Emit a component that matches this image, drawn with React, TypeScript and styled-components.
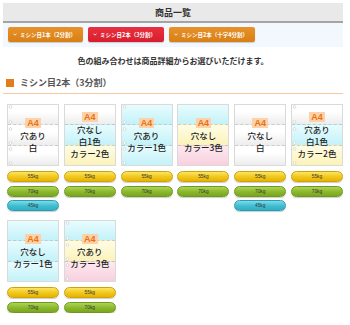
import React from "react";
import styled, { createGlobalStyle } from "styled-components";

const Global = createGlobalStyle`
  html, body { margin: 0; padding: 0; background: #fff; }
  body { font-family: "Noto Sans CJK JP", "Noto Sans", sans-serif; color: #333; }
`;

const Page = styled.div`
  width: 340px;
  margin-left: 3px;
  padding-top: 3px;
`;

const TitleBar = styled.div`
  height: 18px;
  background: #e9e9e9;
  border-bottom: 2px solid #a4a4a4;
  display: flex;
  align-items: center;
  justify-content: center;
  font-size: 9px;
  font-weight: 700;
  color: #333;
`;

const TabBar = styled.div`
  background: #f2f8fe;
  display: flex;
  gap: 5px;
  padding: 4px 5px 5px;
`;

const Tab = styled.div<{ $active?: boolean; $w: number }>`
  width: ${(p) => p.$w}px;
  height: 15px;
  box-sizing: border-box;
  border-radius: 2px;
  background: ${(p) =>
    p.$active
      ? "linear-gradient(#e8303f, #d81e2e)"
      : "linear-gradient(#e6922a, #d97f14)"};
  box-shadow: 0 1px 1px rgba(0, 0, 0, 0.18);
  color: #fff;
  font-size: 5.5px;
  font-weight: 700;
  display: flex;
  align-items: center;
  gap: 3px;
  padding-left: 5px;
  white-space: nowrap;
`;

const Notice = styled.div`
  padding: 9px 0 11px;
  line-height: 10px;
  text-align: center;
  font-size: 8px;
  font-weight: 700;
  color: #333;
`;

const Heading = styled.div`
  display: flex;
  align-items: center;
  gap: 6px;
  padding: 0 0 4px 3px;
  border-bottom: 1px solid #f6c9a2;
  font-size: 9px;
  line-height: 12px;
  font-weight: 700;
  color: #555;
`;

const HeadMark = styled.span`
  width: 8px;
  height: 8px;
  background: #e27c1c;
`;

const Grid = styled.div`
  display: grid;
  grid-template-columns: repeat(6, 52px);
  column-gap: 4.8px;
  row-gap: 9px;
  padding: 10px 0 0 4px;
  align-items: start;
`;

const Item = styled.div`
  display: flex;
  flex-direction: column;
`;

const Card = styled.div`
  height: 62px;
  box-sizing: border-box;
  border: 1px solid #dadada;
  display: grid;
  overflow: hidden;
  & > * {
    grid-area: 1 / 1;
  }
`;

const Bands = styled.div`
  display: flex;
  flex-direction: column;
`;

type Tone = "white" | "cyan" | "yellow" | "pink";

const toneBg: Record<Tone, string> = {
  white: "linear-gradient(#ffffff 35%, #ededed)",
  cyan: "linear-gradient(#e8fcfe, #c3f2f8)",
  yellow: "linear-gradient(#fffce6, #fbf3b9)",
  pink: "linear-gradient(#fde9f0, #f8d0dd)",
};

const Band = styled.div<{ $tone: Tone }>`
  flex: 1;
  background: ${(p) => toneBg[p.$tone]};
  & + & {
    border-top: 1px dashed rgba(170, 170, 170, 0.5);
  }
`;

const Holes = styled.svg`
  width: 6px;
  height: 60px;
  justify-self: start;
  align-self: start;
`;

const Content = styled.div`
  display: flex;
  flex-direction: column;
  align-items: center;
  justify-content: center;
`;

const Size = styled.span`
  background: #fdd1a9;
  color: #e57512;
  font-size: 9px;
  font-weight: 700;
  line-height: 10px;
  padding: 0 2px;
  margin-bottom: 1px;
  font-family: "Liberation Sans", sans-serif;
`;

const Line = styled.span`
  font-size: 8.5px;
  line-height: 12px;
  font-weight: 500;
  color: #222;
  white-space: nowrap;
`;

const Pills = styled.div`
  display: flex;
  flex-direction: column;
  gap: 3.5px;
  margin-top: 5px;
`;

type PillKind = "yellow" | "green" | "blue";

const pillStyle: Record<PillKind, { bg: string; border: string }> = {
  yellow: { bg: "linear-gradient(#fbe660, #f1c61c 55%, #e6b402)", border: "#cfa208" },
  green: { bg: "linear-gradient(#afd455, #8ab72c 55%, #7aa61f)", border: "#6e9820" },
  blue: { bg: "linear-gradient(#7fdbe8, #3fbdd0 55%, #2fb0c6)", border: "#2a9db2" },
};

const Pill = styled.div<{ $kind: PillKind }>`
  height: 11px;
  box-sizing: border-box;
  border-radius: 6px;
  border: 1px solid ${(p) => pillStyle[p.$kind].border};
  background: ${(p) => pillStyle[p.$kind].bg};
  box-shadow: 0 1px 1px rgba(0, 0, 0, 0.2);
  display: flex;
  align-items: center;
  justify-content: center;
  font-family: "Liberation Sans", sans-serif;
  font-size: 4.8px;
  color: #333;
`;

const Chevron = () => (
  <svg width="4" height="3" viewBox="0 0 4 3">
    <path d="M0.5 0.6 L2 2.2 L3.5 0.6" stroke="#fff" strokeWidth="0.8" fill="none" />
  </svg>
);

type Product = {
  holes: boolean;
  lines: string[];
  bands: Tone[];
  weights: string[];
};

const products: Product[] = [
  { holes: true, lines: ["穴あり", "白"], bands: ["white", "white", "white"], weights: ["55kg", "70kg", "45kg"] },
  { holes: false, lines: ["穴なし", "白1色", "カラー2色"], bands: ["white", "cyan", "yellow"], weights: ["55kg", "70kg"] },
  { holes: true, lines: ["穴あり", "カラー1色"], bands: ["cyan", "cyan", "cyan"], weights: ["55kg", "70kg"] },
  { holes: false, lines: ["穴なし", "カラー3色"], bands: ["cyan", "yellow", "pink"], weights: ["55kg", "70kg"] },
  { holes: false, lines: ["穴なし", "白"], bands: ["white", "white", "white"], weights: ["55kg", "70kg", "45kg"] },
  { holes: true, lines: ["穴あり", "白1色", "カラー2色"], bands: ["white", "cyan", "yellow"], weights: ["55kg", "70kg"] },
  { holes: false, lines: ["穴なし", "カラー1色"], bands: ["cyan", "cyan", "cyan"], weights: ["55kg", "70kg"] },
  { holes: true, lines: ["穴あり", "カラー3色"], bands: ["cyan", "yellow", "pink"], weights: ["55kg", "70kg"] },
];

const kindOf = (w: string): PillKind => (w === "55kg" ? "yellow" : w === "70kg" ? "green" : "blue");

const HoleMarks = () => (
  <Holes viewBox="0 0 6 60">
    {[2, 17, 24, 38, 44, 58].map((y) => (
      <circle key={y} cx="2.5" cy={y} r="1.4" fill="#fff" stroke="#c8c8c8" strokeWidth="0.6" />
    ))}
  </Holes>
);

export default function App() {
  return (
    <>
      <Global />
      <Page>
        <TitleBar>商品一覧</TitleBar>
        <TabBar>
          <Tab $w={75}>
            <Chevron />
            ミシン目1本（2分割）
          </Tab>
          <Tab $w={76} $active>
            <Chevron />
            ミシン目2本（3分割）
          </Tab>
          <Tab $w={86}>
            <Chevron />
            ミシン目2本（十字4分割）
          </Tab>
        </TabBar>
        <Notice>色の組み合わせは商品詳細からお選びいただけます。</Notice>
        <Heading>
          <HeadMark />
          ミシン目2本（3分割）
        </Heading>
        <Grid>
          {products.map((p, i) => (
            <Item key={i}>
              <Card>
                <Bands>
                  {p.bands.map((b, j) => (
                    <Band key={j} $tone={b} />
                  ))}
                </Bands>
                {p.holes && <HoleMarks />}
                <Content>
                  <Size>A4</Size>
                  {p.lines.map((l) => (
                    <Line key={l}>{l}</Line>
                  ))}
                </Content>
              </Card>
              <Pills>
                {p.weights.map((w) => (
                  <Pill key={w} $kind={kindOf(w)}>
                    {w}
                  </Pill>
                ))}
              </Pills>
            </Item>
          ))}
        </Grid>
      </Page>
    </>
  );
}
